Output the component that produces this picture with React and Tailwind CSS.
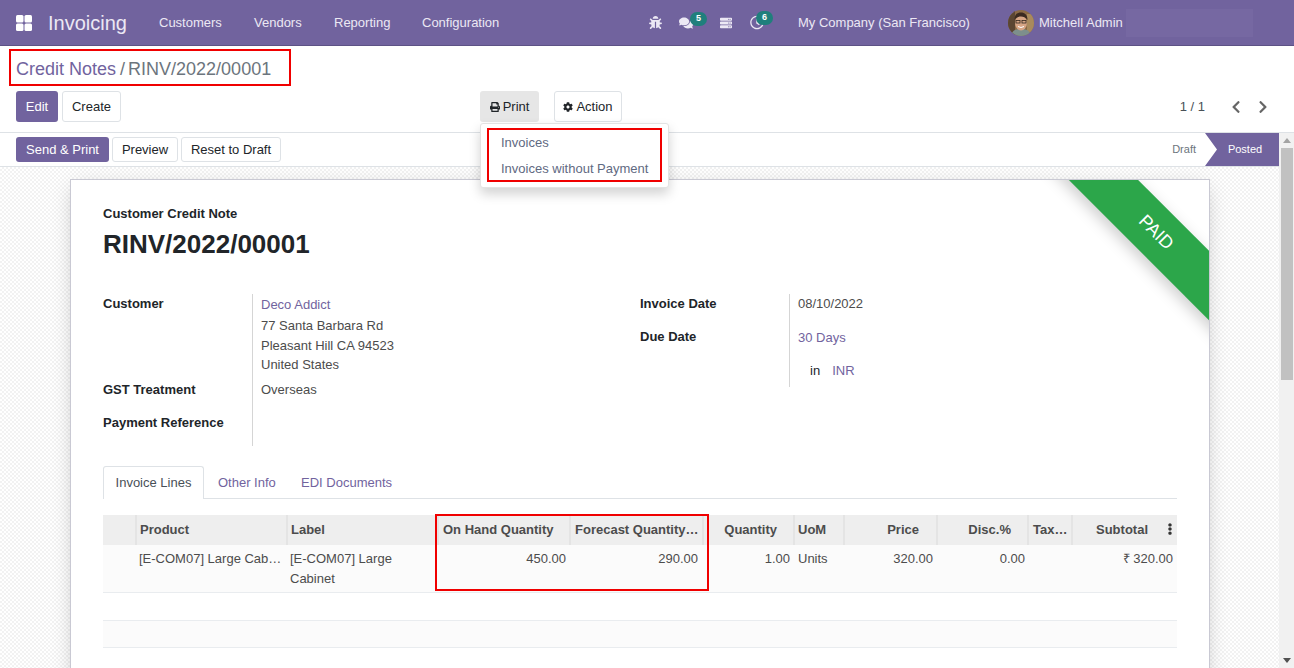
import React from "react";
import { FaBug, FaComments, FaServer, FaRegClock, FaPrint, FaCog, FaChevronLeft, FaChevronRight, FaEllipsisV } from "react-icons/fa";

function Avatar() {
  return (
    <svg width="26" height="26" viewBox="0 0 26 26" className="block">
      <defs><clipPath id="av"><circle cx="13" cy="13" r="13" /></clipPath></defs>
      <g clipPath="url(#av)">
        <rect width="26" height="26" fill="#8a6a45" />
        <rect x="0" y="0" width="7" height="26" fill="#5b4632" />
        <rect x="19" y="4" width="7" height="18" fill="#a98a5c" />
        <path d="M3 26c1-6 5-7 10-7s9 1 10 7z" fill="#7d8f8c" />
        <ellipse cx="13" cy="13" rx="6" ry="7.5" fill="#d6a585" />
        <path d="M6.5 10c0-6 3-7.5 6.5-7.5s6.5 2 6.5 7.5c-2-3-4-3.500-6.500-3.500s-4.500 1-6.500 3.500z" fill="#3a2a20" />
        <rect x="8" y="10.500" width="4" height="2.500" fill="none" stroke="#33291f" strokeWidth=".8" />
        <rect x="14" y="10.500" width="4" height="2.500" fill="none" stroke="#33291f" strokeWidth=".8" />
        <path d="M10 16.500q3 2 6 0" stroke="#fff" strokeWidth="1" fill="none" />
      </g>
    </svg>
  );
}

function Badge({ n, cls }) {
  return (
    <span className={"absolute flex h-[14px] w-[17px] items-center justify-center rounded-full bg-[#1f7f7c] text-[9px] font-bold text-white " + cls}>{n}</span>
  );
}

function Nav() {
  return (
    <header className="flex h-[46px] shrink-0 items-center border-b border-[#5d5285] bg-[#71639e] text-[13px] text-[#ece8f4]">
      <svg width="16" height="16" viewBox="0 0 16 16" className="ml-4 fill-white">
        <rect x="0" y="0" width="7.500" height="7.500" rx="1.500" />
        <rect x="8.500" y="0" width="7.500" height="7.500" rx="1.500" />
        <rect x="0" y="8.500" width="7.500" height="7.500" rx="1.500" />
        <rect x="8.500" y="8.500" width="7.500" height="7.500" rx="1.500" />
      </svg>
      <span className="ml-4 w-[111px] text-[20px]">Invoicing</span>
      <span className="w-[95px]">Customers</span>
      <span className="w-[80px]">Vendors</span>
      <span className="w-[88px]">Reporting</span>
      <span className="w-[227px]">Configuration</span>
      <FaBug className="h-[13px] w-[13px]" />
      <span className="relative ml-[17px] flex w-[14px]">
        <FaComments className="h-[14px] w-[15px]" />
        <Badge n="5" cls="left-[11px] top-[-4px]" />
      </span>
      <FaServer className="ml-[26px] h-[12px] w-[14px]" />
      <span className="relative ml-[17px] flex w-[14px]">
        <FaRegClock className="h-[15px] w-[15px]" />
        <Badge n="6" cls="left-[6px] top-[-4px]" />
      </span>
      <span className="ml-[34px] w-[210px]">My Company (San Francisco)</span>
      <Avatar />
      <span className="ml-[5px] w-[87px]">Mitchell Admin</span>
      <span className="h-[28px] w-[127px] bg-[#7668a2]" />
    </header>
  );
}

function Btn({ children, cls = "" }) {
  return <button className={"flex items-center rounded-[3px] border border-[#dee2e6] bg-white text-[13px] text-[#212529] " + cls}>{children}</button>;
}

function ControlPanel() {
  return (
    <div className="relative z-20 h-[87px] shrink-0 border-b border-[#dee2e6] bg-white">
      <div className="flex h-[45px] items-center pl-4 pt-[2px] text-[18px]">
        <span className="text-[#71639e]">Credit Notes</span>
        <span className="ml-[4px] mr-[3px] text-[#6c757d]">/</span>
        <span className="text-[#6c757d]">RINV/2022/00001</span>
      </div>
      <div className="flex h-[31px] items-center pl-4 pr-[25px]">
        <button className="flex h-[31px] w-[42px] items-center justify-center rounded-[3px] bg-[#71639e] text-[13px] text-white">Edit</button>
        <Btn cls="ml-1 h-[31px] w-[59px] justify-center">Create</Btn>
        <div className="relative ml-[359px]">
          <button className="flex h-[31px] w-[59px] items-center justify-center gap-[3px] rounded-[3px] bg-[#e6e6e6] text-[13px] text-[#212529]"><FaPrint className="h-[10px] w-[10px]" />Print</button>
          <div className="absolute left-0 top-[32px] z-30 flex h-[65px] w-[189px] flex-col rounded-[3px] border border-[#e3e3e3] bg-white pl-[20px] pt-[6px] text-[13px] text-[#5f6a82] shadow-[0_6px_12px_rgba(0,0,0,0.175)]">
            <span className="flex h-[26px] items-center">Invoices</span>
            <span className="flex h-[26px] items-center">Invoices without Payment</span>
          </div>
        </div>
        <Btn cls="ml-[15px] h-[31px] w-[68px] justify-center gap-[3px]"><FaCog className="h-[10px] w-[10px]" />Action</Btn>
        <span className="ml-auto text-[13px] text-[#495057]">1 / 1</span>
        <FaChevronLeft className="ml-[25px] h-[14px] w-[12px] text-[#666666]" />
        <FaChevronRight className="ml-[15px] h-[14px] w-[12px] text-[#666666]" />
      </div>
    </div>
  );
}

function StatusBar() {
  return (
    <div className="flex h-[34px] shrink-0 items-center border-b border-[#dee2e6] bg-white pl-4">
      <button className="flex h-[25px] w-[93px] items-center justify-center rounded-[3px] bg-[#71639e] text-[13px] text-white">Send &amp; Print</button>
      <Btn cls="ml-[3px] h-[25px] w-[66px] justify-center">Preview</Btn>
      <Btn cls="ml-[3px] h-[25px] w-[100px] justify-center">Reset to Draft</Btn>
      <span className="ml-auto text-[11px] text-[#6c757d]">Draft</span>
      <span className="ml-[9px] flex h-[33px] w-[74px] items-center justify-center pl-[6px] text-[11px] text-white bg-[#71639e] [clip-path:polygon(0_0,100%_0,100%_100%,0_100%,12px_50%)]">Posted</span>
    </div>
  );
}

function Field({ label, h, children, pad = "" }) {
  return (
    <div className={"flex " + h}>
      <div className={"w-[149px] shrink-0 font-bold text-[#212529] " + pad}>{label}</div>
      <div className="flex-1 border-l border-[#d5d5d5] pl-[8px] text-[#4c4c4c]">{children}</div>
    </div>
  );
}

const cols = [33, 151, 151, 132, 133, 91, 50, 93, 91, 44, 105];
const heads = [
  ["", ""],
  ["Product", "text-left pl-[3px]"],
  ["Label", "text-left pl-[3px]"],
  ["On Hand Quantity", "text-left pl-[4px]"],
  ["Forecast Quantity…", "text-left pl-[4px]"],
  ["Quantity", "text-right pr-[16px]"],
  ["UoM", "text-left pl-[3px]"],
  ["Price", "text-right pr-[17px]"],
  ["Disc.%", "text-right pr-[16px]"],
  ["Tax…", "text-left pl-[4px]"],
  ["Subtotal", "text-right pr-[29px]"],
];

function Lines() {
  return (
    <table className="mt-[16px] w-[1074px] table-fixed border-collapse text-[13px]">
      <colgroup>{cols.map((w, i) => <col key={i} style={{ width: w }} />)}</colgroup>
      <thead>
        <tr className="h-[30px] bg-[#eeeeee] text-[#4c4c4c]">
          {heads.map(([t, c], i) => (
            <th key={i} className={"relative whitespace-nowrap border-l-2 border-[#e4e4e4] px-[2px] font-bold first:border-l-0 " + c}>
              {t}
              {i === 10 && <FaEllipsisV className="absolute right-[1px] top-[8px] h-[12px] w-[12px] text-[#333]" />}
            </th>
          ))}
        </tr>
      </thead>
      <tbody className="text-[#4c4c4c]">
        <tr className="h-[47px] border-b border-[#e9ecef] bg-[#fbfbfb] align-top leading-[20px]">
          <td />
          <td className="truncate px-[3px] pt-[4px]">[E-COM07] Large Cabinet</td>
          <td className="px-[3px] pt-[4px]">[E-COM07] Large Cabinet</td>
          <td className="px-[4px] pt-[4px] text-right">450.00</td>
          <td className="pl-[4px] pr-[5px] pt-[4px] text-right">290.00</td>
          <td className="px-[4px] pt-[4px] text-right">1.00</td>
          <td className="px-[4px] pt-[4px]">Units</td>
          <td className="px-[4px] pt-[4px] text-right">320.00</td>
          <td className="pl-[4px] pr-[3px] pt-[4px] text-right">0.00</td>
          <td />
          <td className="px-[4px] pt-[4px] text-right">₹ 320.00</td>
        </tr>
        <tr className="h-[28px] border-b border-[#e9ecef] bg-white"><td colSpan={11} /></tr>
        <tr className="h-[27px] border-b border-[#e9ecef] bg-[#fbfbfb]"><td colSpan={11} /></tr>
      </tbody>
    </table>
  );
}

function Sheet() {
  return (
    <div className="relative ml-[70px] h-[600px] w-[1140px] overflow-hidden border border-[#c9c9d3] bg-white px-[32px] pt-[26px] text-[13px] shadow-[0_5px_20px_-5px_rgba(0,0,0,0.25)]">
      <div className="absolute left-[955px] top-[28px] flex h-[49px] w-[260px] rotate-45 items-center justify-center bg-[#2ca64a] text-[18px] text-white shadow-[0_5px_15px_rgba(0,0,0,0.2)]">PAID</div>
      <div className="font-bold leading-[16px] text-[#212529]">Customer Credit Note</div>
      <h1 className="mt-[4px] text-[26px] font-bold leading-[36px] text-[#212529]">RINV/2022/00001</h1>
      <div className="mt-[32px] flex leading-[20px]">
        <div className="w-[537px]">
          <div className="w-[500px]">
            <Field label="Customer" h="h-[85px]">
              <div className="pt-[1px] text-[#71639e]">Deco Addict</div>
              <div className="pt-[1px]">77 Santa Barbara Rd</div>
              <div>Pleasant Hill CA 94523</div>
              <div className="-mt-[1px]">United States</div>
            </Field>
            <Field label="GST Treatment" h="h-[33px]" pad="pt-[1px]"><div className="pt-[1px]">Overseas</div></Field>
            <Field label="Payment Reference" h="h-[34px]" pad="pt-[1px]"><div /></Field>
          </div>
        </div>
        <div className="flex-1">
          <Field label="Invoice Date" h="h-[33px]"><div>08/10/2022</div></Field>
          <Field label="Due Date" h="h-[33px]"><div className="pt-[1px] text-[#71639e]">30 Days</div></Field>
          <Field label="" h="h-[27px]"><div className="pt-[1px]"><span className="ml-[12px] text-[#212529]">in</span><span className="ml-[12px] text-[#71639e]">INR</span></div></Field>
        </div>
      </div>
      <div className="mt-[20px] flex h-[33px] w-[1074px] border-b border-[#dee2e6]">
        <span className="flex h-[33px] w-[101px] items-center justify-center rounded-t-[3px] border border-b-0 border-[#dee2e6] bg-white text-[#495057]">Invoice Lines</span>
        <span className="flex h-[32px] w-[97px] items-center pl-[14px] pt-[1px] text-[#71639e]">Other Info</span>
        <span className="flex h-[32px] items-center pt-[1px] text-[#71639e]">EDI Documents</span>
      </div>
      <Lines />
    </div>
  );
}

function Scrollbar() {
  return (
    <div className="flex w-[15px] shrink-0 flex-col items-center bg-[#f1f1f1] pl-[1px]">
      <span className="mt-[5px] h-0 w-0 border-x-[4px] border-b-[5px] border-x-transparent border-b-[#a3a3a3]" />
      <span className="mt-[5px] h-[232px] w-[12px] bg-[#c1c1c1]" />
      <span className="mb-[5px] mt-auto h-0 w-0 border-x-[4px] border-t-[5px] border-x-transparent border-t-[#505050]" />
    </div>
  );
}

const redBox = "pointer-events-none absolute z-40 border-2 border-[#f00000]";

export default function App() {
  return (
    <div className="relative flex h-[668px] w-[1294px] flex-col overflow-hidden bg-white font-['Liberation_Sans',Arial,sans-serif]">
      <Nav />
      <ControlPanel />
      <div className="flex min-h-0 flex-1">
        <div className="flex min-w-0 flex-1 flex-col">
          <StatusBar />
          <div className="flex-1 overflow-hidden bg-[repeating-conic-gradient(#f2f2f2_0_25%,#ffffff_0_50%)] bg-[length:4px_4px] pt-[12px]">
            <Sheet />
          </div>
        </div>
        <Scrollbar />
      </div>
      <div className={redBox + " left-[9px] top-[49px] h-[37px] w-[282px]"} />
      <div className={redBox + " left-[487px] top-[128px] h-[54px] w-[175px]"} />
      <div className={redBox + " left-[435px] top-[514px] h-[77px] w-[274px]"} />
    </div>
  );
}
